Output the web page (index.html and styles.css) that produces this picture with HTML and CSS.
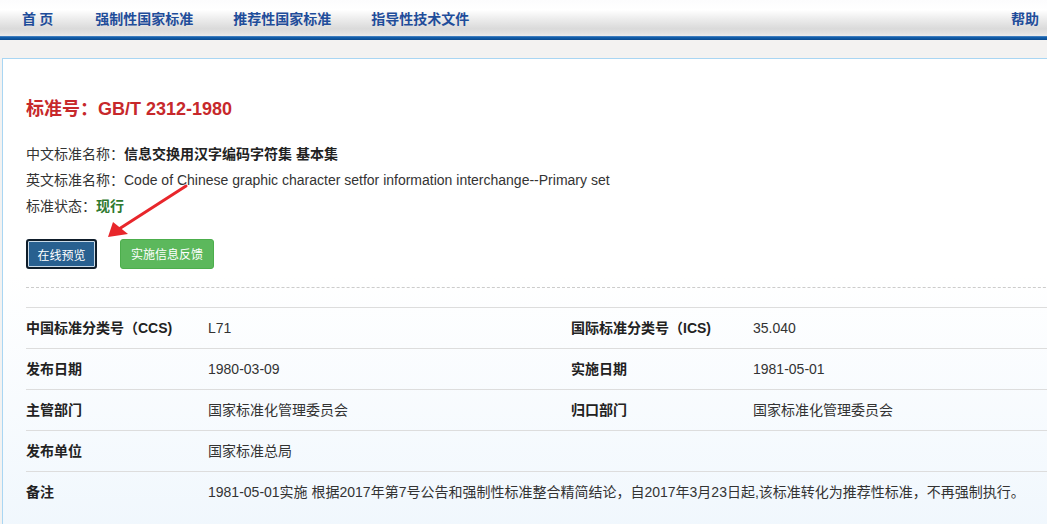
FILE: index.html
```html
<!DOCTYPE html>
<html lang="zh-CN">
<head>
<meta charset="utf-8">
<title>GB/T 2312-1980</title>
<link rel="stylesheet" href="styles.css">
</head>
<body>
<div class="page">
  <header class="topnav">
    <nav class="menu">
      <a class="menu-item first" href="#">首&nbsp;页</a>
      <a class="menu-item" href="#">强制性国家标准</a>
      <a class="menu-item" href="#">推荐性国家标准</a>
      <a class="menu-item" href="#">指导性技术文件</a>
    </nav>
    <a class="menu-help" href="#">帮助</a>
  </header>
  <div class="topline"></div>

  <main class="panel">
    <h1 class="std-title">标准号：GB/T 2312-1980</h1>
    <div class="info">
      <div class="info-row"><span class="info-label">中文标准名称：</span><b class="info-value">信息交换用汉字编码字符集 基本集</b></div>
      <div class="info-row"><span class="info-label">英文标准名称：</span><span class="info-value">Code of Chinese graphic character setfor information interchange--Primary set</span></div>
      <div class="info-row"><span class="info-label">标准状态：</span><b class="info-value status">现行</b></div>
    </div>
    <div class="actions">
      <button class="btn btn-primary" type="button">在线预览</button>
      <button class="btn btn-success" type="button">实施信息反馈</button>
    </div>
    <div class="dashed"></div>
    <table class="detail">
      <colgroup>
        <col class="c-label"><col class="c-value"><col class="c-label"><col class="c-value">
      </colgroup>
      <tr>
        <th>中国标准分类号（CCS)</th><td>L71</td>
        <th>国际标准分类号（ICS)</th><td>35.040</td>
      </tr>
      <tr>
        <th>发布日期</th><td>1980-03-09</td>
        <th>实施日期</th><td>1981-05-01</td>
      </tr>
      <tr>
        <th>主管部门</th><td>国家标准化管理委员会</td>
        <th>归口部门</th><td>国家标准化管理委员会</td>
      </tr>
      <tr>
        <th>发布单位</th><td colspan="3">国家标准总局</td>
      </tr>
      <tr>
        <th>备注</th><td colspan="3">1981-05-01实施 根据2017年第7号公告和强制性标准整合精简结论，自2017年3月23日起,该标准转化为推荐性标准，不再强制执行。</td>
      </tr>
    </table>
  </main>

  <svg class="annot-arrow" width="1047" height="524" viewBox="0 0 1047 524" aria-hidden="true">
    <line x1="186" y1="186" x2="119" y2="229" stroke="#e8262b" stroke-width="3" stroke-linecap="round"/>
    <polygon points="108,237 113,222 128,234" fill="#e8262b"/>
  </svg>
</div>
</body>
</html>
```

FILE: styles.css
```css
html, body {
  margin: 0;
  padding: 0;
  overflow: hidden;
}

body {
  background: #f3f2f1;
  font-family: "Liberation Sans", "Noto Sans CJK SC", sans-serif;
  font-size: 14px;
  color: #333;
}

.page {
  position: relative;
  width: 1047px;
  height: 524px;
  overflow: hidden;
}

/* top navigation */
.topnav {
  height: 36px;
  display: flex;
  align-items: center;
  justify-content: space-between;
  background: linear-gradient(to bottom, #fcfcfd 0%, #ffffff 28%, #ebebeb 55%, #dadada 80%, #e2e2e2 92%, #ececec 100%);
}

.menu {
  display: flex;
  align-items: center;
  padding-left: 22px;
}

.menu-item,
.menu-help {
  font-family: "Noto Sans CJK SC", "Liberation Sans", sans-serif;
  font-size: 14px;
  font-weight: bold;
  color: #1f4d9a;
  text-decoration: none;
  line-height: 20px;
}

.menu-item {
  margin-right: 40px;
}

.menu-item.first {
  margin-right: 42px;
}

.menu-help {
  margin-right: 8px;
}

.topline {
  height: 4px;
  background: linear-gradient(to bottom, #5b8fc8 0%, #1561ad 30%, #0d549e 70%, #0a4a8e 100%);
}

/* main panel */
.panel {
  position: relative;
  margin: 18px 0 0 2px;
  width: 1130px;
  height: 480px;
  box-sizing: border-box;
  border: 1px solid #a9d6f3;
  padding: 37px 0 0 23px;
  background: linear-gradient(to bottom, #ffffff 0%, #ffffff 45%, #f0f7fd 100%);
}

.std-title {
  margin: 0;
  font-size: 18px;
  line-height: 26px;
  font-weight: bold;
  color: #c7282b;
}

.info {
  margin-top: 19px;
}

.info-row {
  line-height: 26px;
  font-size: 14px;
  color: #333;
}

b.info-value {
  font-weight: bold;
  color: #222;
}

.info-value.status {
  color: #2f7a2f;
}

.actions {
  margin-top: 20px;
  display: flex;
  gap: 23px;
}

.btn {
  box-sizing: border-box;
  height: 30px;
  padding: 0;
  font-family: "Noto Sans CJK SC", "Liberation Sans", sans-serif;
  font-size: 12px;
  line-height: 28px;
  color: #fff;
  text-align: center;
  border-radius: 3px;
  cursor: pointer;
}

.btn-primary {
  width: 71px;
  background: #286090;
  border: 2px solid #0f1d2a;
  box-shadow: inset 0 0 0 1px #c9dbe9;
}

.btn-success {
  width: 94px;
  background: #5cb85c;
  border: 1px solid #4cae4c;
}

.dashed {
  margin-top: 18px;
  width: 1090px;
  border-top: 1px dashed #cccccc;
}

.detail {
  margin-top: 19px;
  width: 1090px;
  border-collapse: collapse;
  table-layout: fixed;
}

.c-label { width: 182px; }
.c-value { width: 363px; }

.detail th,
.detail td {
  padding: 10px 0;
  line-height: 20px;
  text-align: left;
  vertical-align: top;
  border-top: 1px solid #dddddd;
  font-size: 14px;
  white-space: nowrap;
}

.detail th {
  font-weight: bold;
  color: #222;
}

.detail td {
  color: #333;
}

/* annotation arrow over the content */
.annot-arrow {
  position: absolute;
  left: 0;
  top: 0;
  pointer-events: none;
}
```
